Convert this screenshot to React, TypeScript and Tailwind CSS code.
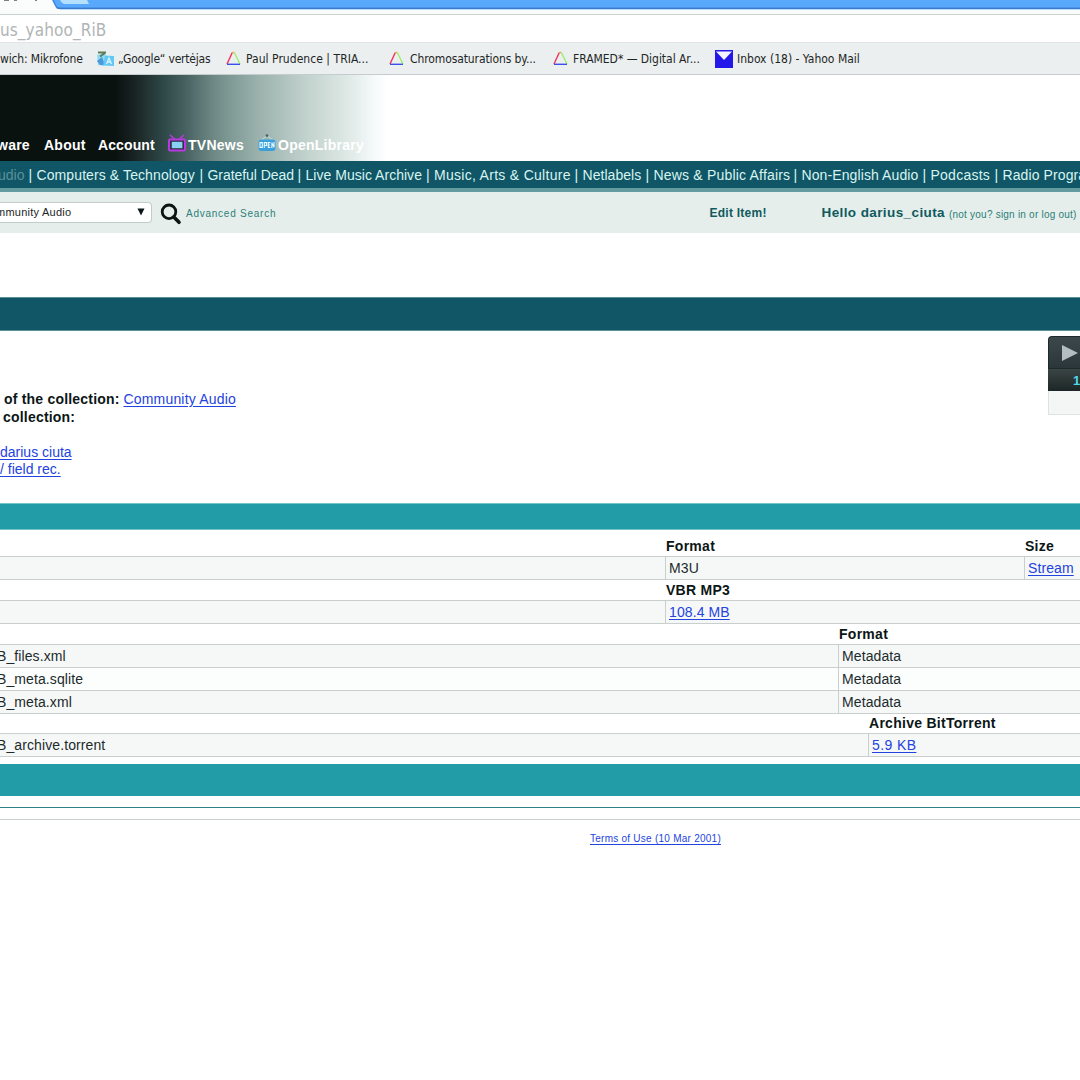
import React from "react";

const ui = "font-['DejaVu_Sans_Condensed','DejaVu_Sans',sans-serif] [font-stretch:condensed]";

function Triangle() {
  return (
    <svg width="15" height="15" viewBox="0 0 15 15" fill="none" strokeWidth="1.4" className="shrink-0">
      <path d="M1 13 L6.3 1.5" stroke="#f0305a" />
      <path d="M6 1.5 H8.5" stroke="#e8a860" />
      <path d="M8.3 1.5 L14 13" stroke="#9af06a" />
      <path d="M1 13.3 H14" stroke="#3a50e8" />
    </svg>
  );
}

function TranslateIcon() {
  return (
    <svg width="18" height="16" viewBox="0 0 18 16" className="shrink-0">
      <path d="M0 4 L8 2 L10 9 L7 15 L1 14 Z" fill="#8edcf2" />
      <path d="M1 1.5 H9 M3 5.5 L8 2" stroke="#5c7c5c" strokeWidth="1.8" fill="none" />
      <path d="M0 10 L5 6 L8 14 H3 Z" fill="#4b98dc" />
      <path d="M8 4.5 L17 5 V15 L6 14.5 Z" fill="#62c8f4" />
      <path d="M9.5 13 L12 7 L14.5 13 M10.5 11 H13.6" stroke="#d8f4ff" strokeWidth="1.3" fill="none" />
    </svg>
  );
}

function MailIcon() {
  return (
    <svg width="18" height="18" viewBox="0 0 18 18" className="shrink-0">
      <rect width="18" height="18" fill="#2418e8" />
      <path d="M1 1.5 H17 L9 10 Z" fill="#f4f4ff" />
    </svg>
  );
}

function TvIcon() {
  return (
    <svg width="18" height="18" viewBox="0 0 18 18" fill="none" className="shrink-0">
      <path d="M2 1 L6.5 5 M16 1 L11.5 5" stroke="#b83ade" strokeWidth="1.6" />
      <rect x="1" y="5.5" width="16" height="11" rx="1" fill="#30304c" stroke="#b83ade" strokeWidth="2" />
      <rect x="3.8" y="7.8" width="10.6" height="6.4" fill="#8ad0f2" />
    </svg>
  );
}

function OpenSign() {
  return (
    <svg width="18" height="18" viewBox="0 0 18 18" fill="none" className="shrink-0">
      <path d="M3 6 L9 2 L15 6" stroke="#c4dadd" strokeWidth="1" />
      <circle cx="9" cy="1.6" r="1.3" fill="#4a6064" />
      <rect x="0.5" y="5.5" width="17" height="11.5" rx="3" fill="#3a9fdc" />
      <path d="M2 8.6 H4.3 V13.4 H2 Z M6.3 14 V8.6 H8.6 V11.5 H6.3 M12.4 8.6 H10.3 V13.4 H12.4 M10.3 11 H12 M13.9 14 V8.6 L16 13.4 V8" stroke="#e9faff" strokeWidth="1.1" />
    </svg>
  );
}

const topics = [
  ["Computers & Technology", "w-[171px]", "tracking-[0.1px]"],
  ["Grateful Dead", "w-[98px]", "tracking-[-0.05px]"],
  ["Live Music Archive", "w-[128.5px]", "tracking-[0.03px]"],
  ["Music, Arts & Culture", "w-[148.5px]", "tracking-[0.29px]"],
  ["Netlabels", "w-[71px]", "tracking-[0.05px]"],
  ["News & Public Affairs", "w-[148px]", "tracking-[0.19px]"],
  ["Non-English Audio", "w-[129px]", "tracking-[0.1px]"],
  ["Podcasts", "w-[72px]", "tracking-[0.25px]"],
  ["Radio Programs", "w-[120px]", "tracking-[0.1px]"],
];

function Head({ pad, h = "h-5 leading-5", children }: { pad: string; h?: string; children: React.ReactNode }) {
  return <div className={`flex font-bold tracking-[0.27px] ${h} ${pad}`}>{children}</div>;
}

function Row({ left, name, bg = "bg-[#f6f8f8]", children }: { left: string; name?: string; bg?: string; children: React.ReactNode }) {
  return (
    <div className={`flex h-6 border-y border-[#c9cfcf] leading-[23px] text-[#1b2b2b] ${bg}`}>
      <div className={`shrink-0 ${left}`}>
        <span className="-ml-[3px] tracking-[0.1px]">{name}</span>
      </div>
      <div className="flex grow border-l border-[#c9cfcf] pl-[3px] tracking-[0.1px]">{children}</div>
    </div>
  );
}

function Link({ children, className = "" }: { children: React.ReactNode; className?: string }) {
  return <a className={`text-[#2343e0] underline underline-offset-2 ${className}`}>{children}</a>;
}

export default function App() {
  return (
    <div className="h-[1080px] w-[1080px] overflow-hidden whitespace-nowrap bg-white font-['Liberation_Sans',Arial,sans-serif] text-[14px] text-[#0c1616]">
      <svg width="1080" height="10" viewBox="0 0 1080 10" className="block">
        <rect width="1080" height="10" fill="#58a8fc" />
        <rect y="7.6" width="1080" height="1.4" fill="#3c78cc" />
        <rect y="9" width="1080" height="1" fill="#b8dcf8" />
        <path d="M0 0 H52 L55 6 Q56 9 60 9.5 V10 H0 Z" fill="#fbfdfd" />
        <path d="M53 0 L56 6 Q57 8.5 61 8.5" stroke="#3c78cc" fill="none" />
        <path d="M60 0 H87 L89 4 H65 Q62 4 60 0 Z" fill="#b4e0fc" />
        <path d="M4 0 H9 M14 0 H17 M35 0 H37" stroke="#555" strokeWidth="1.4" />
      </svg>
      <div className="h-[5px] border-b border-[#c8d2d0] bg-[#fafcfc]" />
      <div className={`h-[27px] text-[17px] font-light leading-[30px] tracking-[0.1px] text-[#b0b5b5] ${ui}`}>us_yahoo_RiB</div>
      <div className={`flex h-[33px] items-center border-b border-t border-b-[#c4cccc] border-t-[#dfe4e4] bg-[#ecefef] text-[12px] text-[#1c2626] ${ui}`}>
        <span className="w-[97px] shrink-0 tracking-[-0.15px]">wich: Mikrofone</span>
        <TranslateIcon />
        <span className="ml-[3px] w-[108px] shrink-0 tracking-[-0.2px]">„Google“ vertėjas</span>
        <Triangle />
        <span className="ml-[5px] w-[143px] shrink-0 tracking-[0.04px]">Paul Prudence | TRIA...</span>
        <Triangle />
        <span className="ml-[6px] w-[143px] shrink-0 tracking-[-0.1px]">Chromosaturations by...</span>
        <Triangle />
        <span className="ml-[5px] w-[142px] shrink-0 tracking-[-0.03px]">FRAMED* — Digital Ar...</span>
        <MailIcon />
        <span className="ml-1 tracking-[0px]">Inbox (18) - Yahoo Mail</span>
      </div>
      <div className="flex h-[86px] items-end bg-[linear-gradient(90deg,#0a1210_0px,#0a1210_115px,#17211f_132px,#304a4a_165px,#466160_185px,#708b87_215px,#93aba6_250px,#bdcec9_300px,#e0eae7_350px,#f6fafa_375px,#ffffff_388px)] pb-[6px] text-[14px] font-bold leading-5 tracking-[0.25px] text-white">
        <span className="-ml-[3px] w-[47px] shrink-0">ware</span>
        <span className="w-[54px] shrink-0">About</span>
        <span className="w-[70px] shrink-0 tracking-[0.1px]">Account</span>
        <span className="mb-[3px]"><TvIcon /></span>
        <span className="ml-[2px] w-[70px] shrink-0">TVNews</span>
        <span className="mb-[3px]"><OpenSign /></span>
        <span className="ml-[2px]">OpenLibrary</span>
      </div>
      <div className="flex h-[31px] border-b-4 border-[#639b9f] bg-[#105666] leading-[28px] text-[#d8f4f0]">
        <span className="w-[24.5px] shrink-0 text-[#5a919b]"><span className="-ml-[2px]">udio</span></span>
        {topics.map(([name, w, tracking]) => (
          <span key={name} className={`flex shrink-0 ${w}`}>
            <span className="w-3 shrink-0 pl-1">|</span>
            <span className={tracking}>{name}</span>
          </span>
        ))}
      </div>
      <div className="flex h-[41px] items-center bg-[#e6eeeb] text-[#0f5a5e]">
        <div className="-mt-px flex h-[21px] w-[152px] shrink-0 items-center justify-between rounded-r-sm border border-l-0 border-[#c2cccc] bg-white pr-1.5 text-[11px] text-[#1c2626]">
          <span className="-ml-[4px] pt-px tracking-[0.25px]">mmunity Audio</span>
          <svg width="8" height="8" viewBox="0 0 8 8"><path d="M0.5 0.5 H7.5 L4 7.5 Z" fill="#0c1616" /></svg>
        </div>
        <svg width="22" height="22" viewBox="0 0 22 22" fill="none" className="ml-2 mt-[3px] shrink-0">
          <circle cx="9" cy="8.8" r="6.8" stroke="#0c1414" strokeWidth="2.8" />
          <path d="M13.8 14 L19 19.3" stroke="#0c1414" strokeWidth="3.6" strokeLinecap="round" />
        </svg>
        <span className="ml-1 w-[523.5px] shrink-0 pt-px text-[10px] tracking-[0.75px] text-[#2a8078]">Advanced Search</span>
        <span className="w-[112px] shrink-0 pt-px text-[12px] font-bold tracking-[0.25px]">Edit Item!</span>
        <span className="pt-px text-[13.5px] font-bold tracking-[0.4px]">Hello darius_ciuta</span>
        <span className="ml-1 mt-[3px] text-[10px] tracking-[0.22px] text-[#2a8078]">(not you? sign in or log out)</span>
      </div>
      <div className="mt-[64px] h-[34px] border-y border-[#5c9099] bg-[#105666]" />
      <div className="flex h-[172px] justify-between pt-[5px]">
        <div className="pt-[55px] leading-[17.5px]">
          <div className="pl-1"><b className="tracking-[0.2px]">of the collection:</b> <Link className="tracking-[0.18px]">Community Audio</Link></div>
          <div className="pl-[3px] font-bold tracking-[0.2px]">collection:</div>
          <div className="mt-[17.5px]"><Link>darius ciuta</Link></div>
          <div><Link>/ field rec.</Link></div>
        </div>
        <div className="w-8 shrink-0 overflow-hidden">
          <div className="flex h-[33px] items-center rounded-tl border border-r-0 border-[#1c2a2c] bg-linear-to-b from-[#3c484c] to-[#2a3639] pl-[13px]">
            <svg width="16" height="16" viewBox="0 0 16 16"><path d="M0 0 L16 8 L0 16 Z" fill="#b4bec2" /></svg>
          </div>
          <div className="h-[22px] bg-linear-to-b from-[#3a4644] to-[#1c2626] pl-[25px] text-[13px] font-bold leading-[24px] text-[#4cdcec]">1</div>
          <div className="h-6 border border-r-0 border-t-0 border-[#dde2e2] bg-[#f4f6f6]" />
        </div>
      </div>
      <div className="h-[27px] border-y border-[#74c4ca] bg-[#229da8]" />
      <div className="pt-[6px]">
        <Head pad="pl-[666px]"><span className="w-[359px]">Format</span><span>Size</span></Head>
        <Row left="w-[665px]"><span className="w-[355px]">M3U</span><div className="border-l border-[#c9cfcf] pl-[3px]"><Link>Stream</Link></div></Row>
        <Head pad="pl-[666px]">VBR MP3</Head>
        <Row left="w-[665px]"><Link>108.4 MB</Link></Row>
        <Head pad="pl-[839px]">Format</Head>
        <Row left="w-[838px]" name="B_files.xml">Metadata</Row>
        <div className="-mt-px"><Row left="w-[838px]" name="B_meta.sqlite" bg="bg-[#fcfdfd]">Metadata</Row></div>
        <div className="-mt-px"><Row left="w-[838px]" name="B_meta.xml">Metadata</Row></div>
        <Head pad="pl-[869px]" h="h-[19px] leading-[19px]">Archive BitTorrent</Head>
        <Row left="w-[868px]" name="B_archive.torrent"><Link className="tracking-[0.4px]">5.9 KB</Link></Row>
      </div>
      <div className="mt-[7px] h-[32px] bg-[#229da8]" />
      <div className="h-[12px] border-b border-[#2c8088]" />
      <div className="h-3 border-b border-[#c9cfcf]" />
      <div className="pl-[590px] pt-3 text-[10px] leading-[14px]"><Link className="tracking-[0.25px]">Terms of Use (10 Mar 2001)</Link></div>
    </div>
  );
}
